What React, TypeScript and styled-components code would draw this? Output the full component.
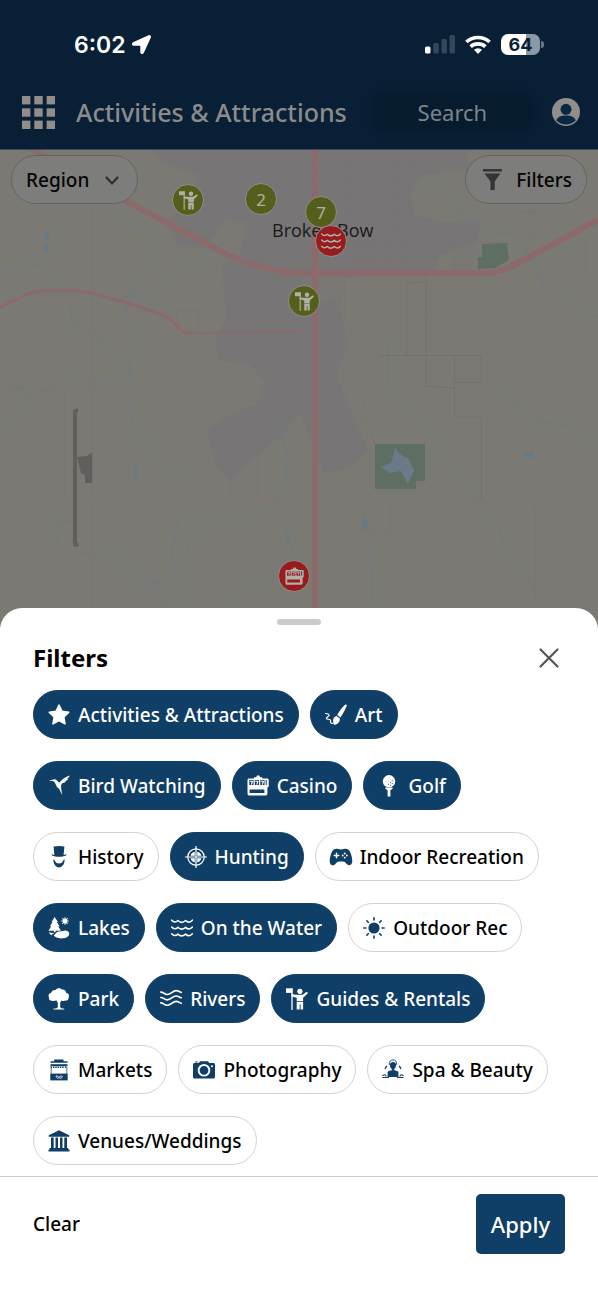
import React from 'react';
import styled, { createGlobalStyle, css } from 'styled-components';
import { FaLocationArrow } from 'react-icons/fa';
import { IoGameController } from 'react-icons/io5';

const NAVY = '#0f3e66';
const SANS = '"Noto Sans", "Open Sans", sans-serif';

const GlobalStyle = createGlobalStyle`
  *, *::before, *::after { box-sizing: border-box; }
  body { margin: 0; background: #fff; font-family: ${SANS}; }
  button, input { font-family: inherit; margin: 0; }
  button { cursor: pointer; }
`;

/* ---------- page shell ---------- */

const Page = styled.div`
  min-height: 100vh;
  display: flex;
  flex-direction: column;
`;

const Header = styled.header`
  background: #081f35;
  border-bottom: 1px solid #3c4a60;
`;

const StatusBar = styled.div`
  display: flex;
  align-items: center;
  justify-content: space-between;
  height: 75px;
  padding: 14px 55px 0 74px;
  color: #fff;
`;

const Clock = styled.div`
  display: flex;
  align-items: center;
  gap: 6px;
  font: 600 23px/28px Inter, sans-serif;
`;

const StatusIcons = styled.div`
  display: flex;
  align-items: center;
  gap: 10px;
`;

const Battery = styled.div`
  position: relative;
  width: 39px;
  height: 21px;
  margin-right: 3px;
  border-radius: 7px;
  background: linear-gradient(90deg, #fff 64%, #8b98a6 64%);
  color: #081f35;
  font: 700 18px/21px Inter, sans-serif;
  text-align: center;

  &::after {
    content: '';
    position: absolute;
    left: 100%;
    top: 7px;
    width: 3px;
    height: 7px;
    margin-left: 1px;
    border-radius: 0 3px 3px 0;
    background: #6b7a8a;
  }
`;

const AppBar = styled.div`
  display: flex;
  align-items: center;
  height: 74px;
  padding: 0 18px 0 22px;
`;

const BarButton = styled.button`
  display: flex;
  padding: 0;
  border: 0;
  background: none;
  color: #918d8a;
`;

const Title = styled.h1`
  margin: 0 26px 0 21px;
  font-size: 25px;
  line-height: 32px;
  font-weight: 500;
  color: #8c8b8b;
  white-space: nowrap;
`;

const Search = styled.input`
  flex: 1;
  min-width: 0;
  height: 38px;
  margin-right: 20px;
  padding: 0;
  border: 0;
  border-radius: 14px;
  background: #061b2d;
  box-shadow: 0 0 6px #061b2d;
  font-size: 22px;
  text-align: center;
  color: #7c858d;
  &::placeholder { color: #7c858d; opacity: 1; }
`;

/* ---------- map ---------- */

const MapArea = styled.main`
  position: relative;
  flex: 1;
  min-height: 300px;
  background: #7b7974;
  overflow: hidden;
`;

const MapDrawing = styled.svg`
  position: absolute;
  inset: 0;
  width: 100%;
  height: 100%;
`;

const MapControls = styled.div`
  position: relative;
  display: flex;
  justify-content: space-between;
  padding: 5px 11px;
`;

const MapButton = styled.button`
  display: flex;
  align-items: center;
  gap: 12px;
  height: 49px;
  padding: 0 14px;
  border: 1px solid #65645f;
  border-radius: 25px;
  background: #7d7d7c;
  font-size: 19px;
  font-weight: 500;
  color: #050505;
`;

const Pin = styled.div<{ $x: number; $y: number; $tone: 'olive' | 'red' }>`
  position: absolute;
  left: calc(50% + ${p => p.$x - 299}px);
  top: ${p => p.$y}px;
  display: flex;
  align-items: center;
  justify-content: center;
  width: 32px;
  height: 32px;
  margin: -16px 0 0 -16px;
  border: 1px solid #8f8e88;
  border-radius: 50%;
  background: ${p => (p.$tone === 'olive' ? '#565e1b' : '#981b1d')};
  color: #b0afa8;
  font-size: 17px;
`;

const Place = styled.div`
  position: absolute;
  left: calc(50% - 27px);
  top: 67px;
  font-family: "Open Sans", sans-serif;
  font-size: 18px;
  line-height: 26px;
  color: #19191a;
  white-space: nowrap;
`;

/* ---------- sheet ---------- */

const Sheet = styled.section`
  position: relative;
  margin-top: -20px;
  padding-top: 11px;
  border-radius: 22px 22px 0 0;
  background: #fff;
`;

const Handle = styled.div`
  width: 44px;
  height: 6px;
  margin: 0 auto;
  border-radius: 3px;
  background: #cbcbcb;
`;

const SheetHead = styled.div`
  display: flex;
  align-items: center;
  justify-content: space-between;
  padding: 17px 38px 16px 33px;
`;

const SheetTitle = styled.h2`
  margin: 0;
  font-size: 24px;
  line-height: 32px;
  font-weight: 700;
  color: #000;
`;

const Close = styled.button`
  display: flex;
  padding: 0;
  border: 0;
  background: none;
  color: #555;
`;

const Chips = styled.div`
  display: flex;
  flex-wrap: wrap;
  gap: 22px 11px;
  padding: 0 33px 11px;
`;

const Chip = styled.button<{ $on?: boolean }>`
  display: flex;
  align-items: center;
  gap: 8px;
  height: 49px;
  padding: 0 14px;
  border: 1px solid #d3d3d6;
  border-radius: 25px;
  background: #fff;
  color: #000;
  font-size: 19px;
  font-weight: 500;
  white-space: nowrap;
  svg { color: ${NAVY}; flex: none; }
  ${p => p.$on && css`
    border-color: ${NAVY};
    background: ${NAVY};
    color: #fff;
    svg { color: #fff; }
  `}
`;

const Footer = styled.footer`
  display: flex;
  align-items: center;
  justify-content: space-between;
  padding: 17px 33px 46px;
  border-top: 1px solid #ccc;
`;

const Clear = styled.button`
  padding: 0;
  border: 0;
  background: none;
  font-size: 19px;
  font-weight: 500;
  color: #000;
`;

const Apply = styled.button`
  height: 60px;
  padding: 0 15px;
  border: 0;
  border-radius: 5px;
  background: ${NAVY};
  font-size: 22px;
  font-weight: 500;
  color: #fff;
`;

/* ---------- icons ---------- */

const Glyph = ({ size = 22, children }: { size?: number; children: React.ReactNode }) => (
  <svg width={size} height={size} viewBox="0 0 22 22" fill="currentColor" aria-hidden="true">{children}</svg>
);

const line = { fill: 'none', stroke: 'currentColor', strokeLinecap: 'round', strokeLinejoin: 'round' } as const;

const Star = () => (
  <Glyph><path d="M11 1.2l3 6.2 6.7.9-4.9 4.7 1.2 6.8-6-3.3-6 3.3 1.2-6.8L1.300 8.300l6.700-.9z" stroke="currentColor" strokeWidth="1.600" strokeLinejoin="round" /></Glyph>
);
const Brush = () => (
  <Glyph>
    <path d="M20.300.6c.9-.4 1.700.3 1.400 1.200-1.500 4-3.700 7.800-6.200 11.600l-3.300-2.300C14.500 7.200 17.200 3.400 20.300.6z" />
    <path d="M11.400 12l3.300 2.300c.6 2.900-1 5.800-5.700 6.700.1-1.500-.7-2.700-.9-4.300-.2-2.300 1.300-4.100 3.300-4.700z" />
    <path d="M.6 9.500c1.800 0 3.700.6 3.500 1.900-.2 1.200-2.800 1.500-2.700 3 .1 1.300 3 .5 3.900 1.400.8.900-.4 2.300.8 3.200.7.5 1.700.3 2.400 0" {...line} strokeWidth="1.200" />
  </Glyph>
);
const Bird = () => (
  <Glyph>
    <path d="M.7 5.800L5.300 4.500c1.300-.6 2.700-.1 3.700 1l2.200 2.300C13.600 4.100 17.200 2 21.800.4c-.5 1.500-1.600 2.700-3.100 3.600l1.700-.2c-1 1.400-2.200 2.200-3.800 2.700l1.500.1c-1.300 1-2.700 1.500-4 1.700-.9 1.400-1.200 2.600-1 4.200l1 7.500-3-6.300C8.900 12.600 8.200 11 7.200 8.300c-.5-1.200-1.200-2-2.200-2.400z" />
  </Glyph>
);
const Slots = ({ size }: { size?: number }) => (
  <Glyph size={size}>
    <path fillRule="evenodd" d="M7 2.200h2.200L10 .6h2.300l.8 1.600h2.200v1.200h4.900c.9 0 1.500.6 1.500 1.500v6c0 .8-.5 1.300-1.300 1.400V18c0 2-.6 2.600-2.300 2.600H2.500C1.300 20.600.5 20 .5 18.800V5c0-1 .6-1.600 1.500-1.600h5zM2.300 5.100v5h4.200v-5zm5.500 0v5H12v-5zm5.500 0v5h4.200v-5zM2.600 14.500v3.400h14.800v-3.400z" />
    <path d="M3.200 6.200h2.300L4.400 9.200M8.700 6.200H11L9.900 9.200M14.200 6.200h2.300l-1.100 3" {...line} strokeWidth="1.100" />
    <path d="M19.200 5v5" stroke={NAVY} strokeWidth="1" />
  </Glyph>
);
const Golf = () => (
  <Glyph>
    <circle cx="11" cy="6.300" r="6.200" />
    <path d="M7.400 12.600h7.200v1.200l-2.200 1.400v6.300H9.600v-6.300l-2.200-1.400z" />
    <path d="M10.500 9.300h.1m2-1.800h.1m-.1 2.800h.1m1.500-4.400h.1m-.1 2.700h.1" stroke={NAVY} strokeWidth="1" strokeLinecap="round" />
  </Glyph>
);
const Hat = () => (
  <Glyph>
    <path d="M5.600.6c3.600-.7 7.200-.7 10.800 0l-.8 8.400c1-.1 1.800-.3 2.400-.8l.6.5c-2 2.800-13.200 2.800-15.200 0l.6-.5c.6.5 1.400.7 2.400.8z" />
    <path d="M5.400 13.600c.7 0 1.200.5 1.600 1.500 1 2 2 2.300 4 2.300s3-.3 4-2.300c.4-1 .9-1.500 1.600-1.500.2 4.300-2.300 7.900-5.600 7.900s-5.800-3.600-5.600-7.900z" />
  </Glyph>
);
const Target = () => (
  <Glyph>
    <circle cx="11" cy="11" r="8.200" {...line} strokeWidth="1.200" />
    <circle cx="11" cy="11" r="5.600" />
    <path d="M11 4v14M4 11h14" stroke={NAVY} strokeWidth="2.400" />
    <path d="M11 .3v21.400M.3 11h21.400" {...line} strokeWidth="1.200" />
  </Glyph>
);
const Lake = () => (
  <Glyph>
    <path d="M6.700 0l3.200 5H8.800l2.800 4.300h-1.400l2.800 4.500H7.500v1.400H5.900v-1.400H.4l2.900-4.500H1.900L4.600 5H3.500z" />
    <path d="M17 .8v6.400M13.800 4h6.400M14.700 1.700l4.600 4.600M19.300 1.700l-4.600 4.600" {...line} strokeWidth="1.200" />
    <circle cx="17" cy="4" r="2.300" />
    <path d="M7.700 16.500c2-2.900 5.500-1.500 7-2.400 2.500-1.300 6.300-.4 6.500 2.600.2 3-3.800 4.700-8 4.700-3.500 0-6.500-1.300-7.500-2.800.6-.8 1.400-1.200 2-2.100z" />
    <path d="M1 15.200c1.600.8 3.300.7 5 .7-.9 1.100-2 1.100-2.300 2.300C2.400 17.500 1.300 16.600 1 15.200z" />
  </Glyph>
);
const Waves = ({ size }: { size?: number }) => (
  <Glyph size={size}>
    {[3.200, 10, 16.800].map(y => (
      <path key={y} d={`M.7 ${y}q3 3.300 6.200.3q3.600 3.700 7.700 0q3.600 3.400 6.800-.3`} {...line} strokeWidth="1.600" />
    ))}
  </Glyph>
);
const Pad = () => <IoGameController size={24} style={{ margin: '0 -1px' }} />;
const Sun = () => (
  <Glyph>
    <circle cx="11" cy="11" r="5.600" />
    <path d="M11 .9v2M11 19.100v2M.9 11h2M19.100 11h2M3.900 3.900l1.400 1.400M16.700 16.700l1.400 1.400M18.100 3.900l-1.400 1.400M5.300 16.700l-1.400 1.400" {...line} strokeWidth="1.600" />
  </Glyph>
);
const Tree = () => (
  <Glyph>
    <path d="M4.200 12.700C2 13 .6 11.300 1 9.600-.2 7.400 1 5.300 3.200 4.800 3.600 2.600 5.700 1.600 7.500 2 9-.3 12.400-.4 13.900 1.500c2.400-.4 4.200 1.300 4.200 3.200 2.500.4 3.600 2.800 2.500 4.800.1 2.200-1.800 3.600-3.700 3-1.200.9-2.700.7-3.500 0l-1.200 2.200v4.600l1.700 1.200h2.300v.9H5.500v-.9h2.600l1.700-1.200v-4.600l-1.500-2.500c-1.400 1-3 .9-4.100.5z" />
  </Glyph>
);
const River = () => (
  <Glyph>
    {[6.300, 11.700, 17.100].map(y => (
      <path key={y} d={`M.8 ${y - 2.200}c2.800 0 3.500 2.400 6.400 2.400 4 0 5-3.900 9-3.900 2.400 0 3 1.300 5 1.800`} {...line} strokeWidth="1.600" />
    ))}
  </Glyph>
);
const Guide = ({ size }: { size?: number }) => (
  <Glyph size={size}>
    <path d="M0 .3h6.600v4.600H0z" />
    <path d="M6 .8v20.600" {...line} strokeWidth="1.300" />
    <circle cx="13.900" cy="3.300" r="2.600" />
    <path d="M5.200 6.300h1.600l3 .5h6.800l3.700-2.700 1.300.2.1 1.200-4.600 4.200v3.500h-6.400V9.800L5.500 8.400z" />
    <path d="M10.700 13.900h6.400v7.600h-2.500v-5h-.9v5h-3z" />
  </Glyph>
);
const Stall = () => (
  <Glyph>
    <path d="M6.200.5h9.300v1.700h4v1.500H2.500V2.200h3.700z" />
    <path d="M2.500 5.200h17v2h-17z" />
    <path d="M3.300 7.600v1.400M5.700 7.600v1.400M8 7.600v1.400M10.300 7.600v1.400M12.600 7.600v1.400M15 7.600v1.400M17.600 7.600v1.400" stroke="currentColor" strokeWidth="1.400" />
    <path d="M3.200 8v7M18.800 8v7" stroke="currentColor" strokeWidth=".7" />
    <path d="M2.300 14.600h17.400v6.800H2.300z" />
    <path d="M8 17c.6 2.600 2.200 2.800 3 1.300.6-1.300 2.600-1.500 3.300-.9-.2 2.500-3 2.200-3.300.9-.6-1.200-2-1.400-3-1.300z" fill="none" stroke="#fff" strokeWidth=".8" />
  </Glyph>
);
const Camera = () => (
  <Glyph>
    <path fillRule="evenodd" d="M7 2.300h8l1.200 1.800h4c1.200 0 1.800.6 1.800 1.700v11.900c0 1.200-.6 1.800-1.800 1.800H1.800C.6 19.500 0 18.900 0 17.700V5.800c0-1.100.6-1.700 1.800-1.700h4zM11 5a6.300 6.300 0 100 12.600A6.300 6.300 0 0011 5zm0 1.900a4.400 4.400 0 110 8.800 4.400 4.400 0 010-8.800zM19 6.300a1 1 0 100 2 1 1 0 000-2z" />
    <path d="M2.200 2.500h2.500v1H2.200z" />
  </Glyph>
);
const Spa = () => (
  <Glyph>
    <path d="M7.200 5.500C7 2.300 8.900.9 11 .9s4 1.400 3.800 4.600" {...line} strokeWidth=".9" />
    <path d="M7.900 6c0-1.900 1.400-3 3.100-3s3.100 1.100 3.100 3c0 1.800-.7 3.200-1.900 4v1.300l2.900.7c1 .3 1.300 1 1.300 2v4H5.600v-4c0-1 .3-1.700 1.300-2l2.900-.7V10C8.600 9.200 7.900 7.800 7.900 6z" />
    <path d="M4.500 7.300L2.300 11M17.500 7.300l2.200 3.700" {...line} strokeWidth="1.300" strokeDasharray="2.500 2" />
    <path d="M.8 16.700c1.600-1.700 2.700-1 3.200.4M21.200 16.700c-1.600-1.700-2.700-1-3.200.4M.8 18.500h5.700M15.500 18.500h5.700" {...line} strokeWidth="1.100" />
  </Glyph>
);
const Bank = () => (
  <Glyph>
    <path d="M11 .3l10.200 4.900v1.600H.8V5.200z" />
    <path d="M3 7.400h2.700v11H3zM7.500 7.400h2.500v11H7.500zM12 7.400h2.500v11H12zM16.300 7.400H19v11h-2.700z" />
    <path d="M1.700 18h18.600v1.500h1.200v2H.5v-2h1.200z" />
  </Glyph>
);

/* ---------- data ---------- */

const filters: { label: string; icon: React.ReactNode; on?: boolean }[] = [
  { label: 'Activities & Attractions', icon: <Star />, on: true },
  { label: 'Art', icon: <Brush />, on: true },
  { label: 'Bird Watching', icon: <Bird />, on: true },
  { label: 'Casino', icon: <Slots />, on: true },
  { label: 'Golf', icon: <Golf />, on: true },
  { label: 'History', icon: <Hat /> },
  { label: 'Hunting', icon: <Target />, on: true },
  { label: 'Indoor Recreation', icon: <Pad /> },
  { label: 'Lakes', icon: <Lake />, on: true },
  { label: 'On the Water', icon: <Waves />, on: true },
  { label: 'Outdoor Rec', icon: <Sun /> },
  { label: 'Park', icon: <Tree />, on: true },
  { label: 'Rivers', icon: <River />, on: true },
  { label: 'Guides & Rentals', icon: <Guide />, on: true },
  { label: 'Markets', icon: <Stall /> },
  { label: 'Photography', icon: <Camera /> },
  { label: 'Spa & Beauty', icon: <Spa /> },
  { label: 'Venues/Weddings', icon: <Bank /> },
];

const TownMap = () => (
  <MapDrawing viewBox="0 0 598 478" preserveAspectRatio="xMidYMin slice" aria-hidden="true">
    <g fill="#777576">
      <path d="M153 0H468V20L420 25 410 45 415 65 445 72 480 70 478 92 440 105 435 120 345 128 340 160 348 195 336 225 350 258 368 300 352 316 325 324 315 300 300 262 282 285 255 308 230 331 215 315 206 280 235 262 256 255 265 232 250 215 218 210 216 185 226 170 222 115 240 108 246 72 225 70 205 98 178 96 166 72 190 55 198 25 160 12Z" />
    </g>
    <path d="M300 128h44v20l-38 6zM455 100l25 0v20h-30z" fill="#7a7874" />
    <g fill="#5f6e62">
      <path d="M482 94L507 93 509 110 495 118 478 119 478 107 482 107z" />
      <path d="M375 294h50v37h-9v8h-41z" />
    </g>
    <path d="M395 298l6 7 7 3 6 12-6 14-4-7-3-6-11 2-9-6 10-4z" fill="#6b7a88" />
    <g fill="none" stroke="#707a7e" strokeWidth="1.500" strokeLinejoin="round">
      <path d="M121 55l5 15 5 7 12 1 8 10 2 14-8 14-5 9-5 14-10 8v20l8 9 10 10-5 15-8 8-2 27" />
      <path d="M121 146l28 0 10-10 12-4 15-18 17-10 15-7 17-12" />
      <path d="M0 120l12 3 10-12 25 7 8 6 4 10 11 18 2 22 25 12 16 24 20 11" />
      <path d="M0 233l20 4 30 4 18-14 54 6" />
      <path d="M122 240l8 14 3 26 20 18 15 20 16 14 10-4" />
      <path d="M190 352l-12 20-6 28 2 25 10 20 3 13M258 365l-20 4-28-2-15 14-8 20-1 22" />
      <path d="M290 268l-8 14 6 28-3 26-17 22-10 8" />
      <path d="M228 455l12-17 28-10 14-18 10-8-3-20" />
      <path d="M56 396l4-25h12M72 402l48 6 10 16 18 6 15 6M150 438q10-15 15 4t-8 14" />
      <path d="M380 179l8 20v32l28 30 15 24 18 25 20 30 14 20 16 18 4 18 20 22 12 24 6 6" />
      <path d="M418 25l30 20 20 25 18 14 25-1 12 13 16 24 5 17 16 2 19 26 19 1" />
      <path d="M503 244l20 15 22 14 22 2 31 15M370 384l3 74" />
      <path d="M0 282l12-12 20-28" />
    </g>
    <path d="M45 81h4v9h-4zM45 94h4v9h-4zM134 312h3v18h-3zM363 362l6 17h-7zM524 302h10v5h-10zM287 382l4 10h-6z" fill="#677a84" />
    <g fill="none" stroke="#807370" strokeWidth="1">
      <path d="M93 10V458M65 240V350M0 238.500H260L300 236M0 350.500H65M95 350.500H538M258 308V350M230 331V350" />
      <path d="M177 183V161H198V183" />
      <path d="M426 125V236L454 238M407 205V133L426 132M380 205.500H481V232.500H455M454.500 205V266M454 267H481.500V350" stroke="#76706d" />
      <path d="M500 126.500H598M536 55V85H520M515 45V62H536M586 85V126M390 352V386L362 381 325 384M535 355V455" />
      <path d="M345 125V170L362 205M350 172L380 205M428 170L445 175M346 238L362 245 367 268 375 294M353 271L368 268" />
      <path d="M300 15H470M300 30H410M345 15V75M300 48H425M345 60H420M300 75H398M300 92H500M345 108H440M398 8V80M410 10V65M360 92V118M375 92V118M390 92V118M405 92V118M454 95V118M265 0V120M283 0V60M285 70V181M260 75V210" opacity=".6" />
    </g>
    <g fill="none" stroke="#8c6a6b" strokeLinejoin="round">
      <path d="M0 157L18 149Q30 141 45 141Q80 139 103 146L133 155 163 165Q175 171 179 178 183 183 192 183" strokeWidth="3" />
      <path d="M190 183L300 181" strokeWidth="2" />
      <path d="M25 -5L128 52 213 97Q255 121 300 123H485Q500 123 520 112L598 70" strokeWidth="6" />
      <path d="M315 0V478" strokeWidth="6" />
    </g>
    <path d="M73 260l5-2v4l-1 1v128l2 5-5 1-1-4z M77 307l10-1 5-4v31h-7v-8l-4-2z" fill="#605f5d" />
  </MapDrawing>
);

export default function App() {
  return (
    <Page>
      <GlobalStyle />
      <Header>
        <StatusBar>
          <Clock>6:02 <FaLocationArrow size={19} /></Clock>
          <StatusIcons>
            <svg width="30" height="19" viewBox="0 0 30 19" aria-hidden="true">
              <rect x="0" y="11.500" width="5.500" height="7" rx="1.500" fill="#fff" />
              <rect x="8.300" y="8" width="5.500" height="10.500" rx="1.500" fill="#34475a" />
              <rect x="16.500" y="4" width="5.500" height="14.500" rx="1.500" fill="#34475a" />
              <rect x="24.500" y="0" width="5.500" height="18.500" rx="1.500" fill="#34475a" />
            </svg>
            <svg width="26" height="19" viewBox="0 0 26 19" fill="none" stroke="#fff" strokeWidth="3.600" aria-hidden="true">
              <path d="M1.400 7a17 17 0 0123.200 0" />
              <path d="M5.600 11.700a11 11 0 0114.800 0" />
              <path d="M13 19l-4-4.200a6 6 0 018 0z" fill="#fff" stroke="none" />
            </svg>
            <Battery>64</Battery>
          </StatusIcons>
        </StatusBar>
        <AppBar>
          <BarButton aria-label="Menu">
            <svg width="33" height="33" viewBox="0 0 33 33" fill="currentColor" aria-hidden="true">
              {[0, 12.300, 24.600].map(y => [0, 12.300, 24.600].map(x => <rect key={`${x}-${y}`} x={x} y={y} width="8.400" height="8.400" />))}
            </svg>
          </BarButton>
          <Title>Activities &amp; Attractions</Title>
          <Search placeholder="Search" aria-label="Search" />
          <BarButton aria-label="Account">
            <svg width="28" height="28" viewBox="0 0 28 28" aria-hidden="true">
              <circle cx="14" cy="14" r="14" fill="currentColor" />
              <circle cx="14" cy="11.300" r="5.500" fill="#0a2845" />
              <path d="M4.200 22.300C6 18.500 9.500 17.500 14 17.500s8 1 9.800 4.800C21.500 25 18 26.500 14 26.500S6.500 25 4.200 22.300z" fill="#0a2845" />
            </svg>
          </BarButton>
        </AppBar>
      </Header>

      <MapArea>
        <TownMap />
        <Place>Broken Bow</Place>
        <Pin $x={188} $y={50} $tone="olive"><Guide size={19} /></Pin>
        <Pin $x={261} $y={49} $tone="olive">2</Pin>
        <Pin $x={321} $y={62} $tone="olive">7</Pin>
        <Pin $x={331} $y={91} $tone="red"><Waves size={20} /></Pin>
        <Pin $x={304} $y={151} $tone="olive"><Guide size={19} /></Pin>
        <Pin $x={294} $y={426} $tone="red"><Slots size={19} /></Pin>
        <MapControls>
          <MapButton>
            Region
            <svg width="22" height="22" viewBox="0 0 22 22" fill="none" stroke="#2e2f31" strokeWidth="2.200" strokeLinecap="round" strokeLinejoin="round" aria-hidden="true">
              <path d="M5.500 8.500L11 14.500 16.500 8.500" />
            </svg>
          </MapButton>
          <MapButton>
            <svg width="24" height="22" viewBox="0 0 24 22" fill="#333436" aria-hidden="true">
              <path d="M3 0h19v2.400H3zM4.500 4.500h16L14.700 12.500v8.500h-4.200v-8.500z" />
            </svg>
            Filters
          </MapButton>
        </MapControls>
      </MapArea>

      <Sheet aria-labelledby="filters-title">
        <Handle />
        <SheetHead>
          <SheetTitle id="filters-title">Filters</SheetTitle>
          <Close aria-label="Close">
            <svg width="22" height="22" viewBox="0 0 22 22" fill="none" stroke="currentColor" strokeWidth="2.200" strokeLinecap="round" aria-hidden="true">
              <path d="M2.500 2.500l17 17M19.500 2.500l-17 17" />
            </svg>
          </Close>
        </SheetHead>
        <Chips>
          {filters.map(f => (
            <Chip key={f.label} $on={f.on} aria-pressed={!!f.on}>{f.icon}{f.label}</Chip>
          ))}
        </Chips>
        <Footer>
          <Clear>Clear</Clear>
          <Apply>Apply</Apply>
        </Footer>
      </Sheet>
    </Page>
  );
}
